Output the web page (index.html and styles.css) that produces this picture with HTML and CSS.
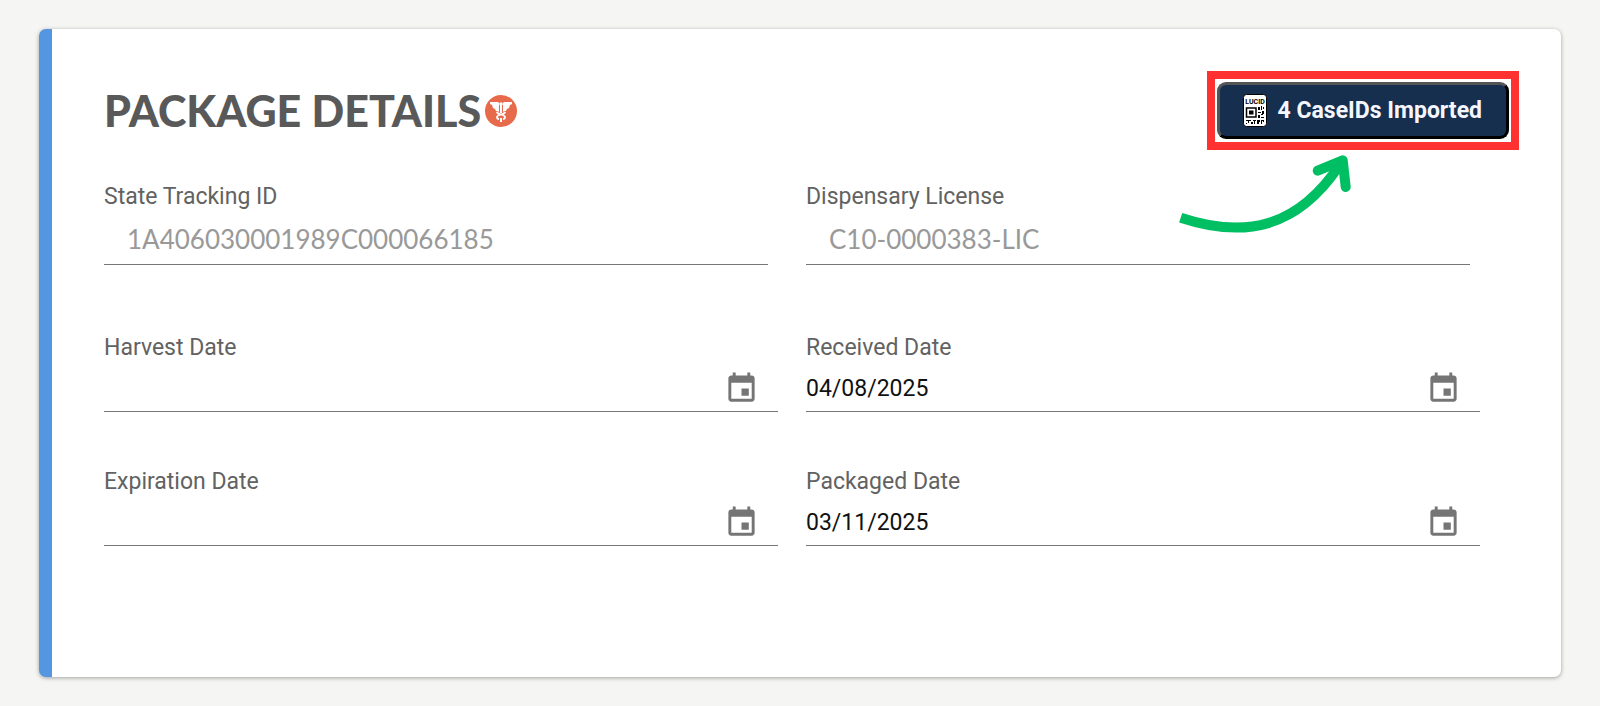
FILE: index.html
```html
<!DOCTYPE html>
<html lang="en">
<head>
    <meta charset="UTF-8">
    <meta name="viewport" content="width=device-width, initial-scale=1.0">
    <title>Package Details</title>
    <link rel="stylesheet" href="styles.css">
</head>
<body>
    <main class="card">
        <header class="card-header">
            <h1>PACKAGE DETAILS
                <svg class="badge" viewBox="0 0 32 32" aria-hidden="true">
                    <circle cx="16" cy="16" r="16" fill="#e76b4a"/>
                    <path d="M5 7h8l2 2v8l-4-1-1-2-2-1-1-3-2-1zM27 7h-8l-2 2v8l4-1 1-2 2-1 1-3 2-1z" fill="#fff"/>
                    <path d="M16 8v19" stroke="#e76b4a" stroke-width="4"/>
                    <path d="M16 9v9M16 23v4" stroke="#fff" stroke-width="2"/>
                    <circle cx="16" cy="9" r="1.800" fill="#fff"/>
                    <path d="M12 17c0 3 8 2 8 5 0 1-1 2-2 2M20 17c0 3-8 2-8 5 0 1 1 2 2 2" fill="none" stroke="#fff" stroke-width="1.800"/>
                </svg>
            </h1>
            <div class="callout">
                <button type="button" class="import-btn">
                    <svg class="qr" viewBox="0 0 24 33" aria-hidden="true">
                        <rect x="0.500" y="0.500" width="23" height="32" rx="3" fill="#fff" stroke="#000"/>
                        <text x="12" y="10" text-anchor="middle">LUCID</text>
                        <path d="M3.500 14h9.500v9h-9.500z" fill="none" stroke="#000" stroke-width="1.500"/>
                        <path d="M6 16.500h4.500v4h-4.500z"/>
                        <path d="M15 13h2v3h-2zM18 12h1v4h-1zM20 13h1v2h-1zM15 18h3v1h-3zM19 17h2v3h-1v1h-2v-1h1zM15 21h2v3h-2zM18 23h3v1h-3zM3 26h5v1h-2v2h-1v-2h-2zM8 28h2v2h-2zM10 26h3v1h-1v3h-1v-3h-1zM14 26h3v2h-1v2h-2zM18 26h3v2h-1v-1h-1v3h-1zM3 29h1v1h-1z"/>
                    </svg>
                    4 CaseIDs Imported
                </button>
                <svg class="arrow" viewBox="0 0 180 90" aria-hidden="true">
                    <path d="M5.700 67.700C70 89 122 78 164 16"/>
                    <path d="M142.700 20.700L167.700 10.300L170.700 37" stroke-linecap="round" stroke-linejoin="round"/>
                </svg>
            </div>
        </header>

        <form class="fields">
            <div class="field id-field">
                <label for="tracking">State Tracking ID</label>
                <input type="text" id="tracking" value="1A406030001989C000066185" disabled>
            </div>
            <div class="field id-field">
                <label for="license">Dispensary License</label>
                <input type="text" id="license" value="C10-0000383-LIC" disabled>
            </div>

            <div class="field">
                <label for="harvest">Harvest Date</label>
                <div class="date-input">
                    <input type="text" id="harvest">
                    <button type="button" aria-label="Choose harvest date">
                        <svg viewBox="0 0 24 24"><path d="M17 12h-5v5h5v-5zM16 1v2H8V1H6v2H5c-1.110 0-1.990.9-1.990 2L3 19c0 1.100.890 2 2 2h14c1.100 0 2-.9 2-2V5c0-1.100-.9-2-2-2h-1V1h-2zm3 18H5V8h14v11z"/></svg>
                    </button>
                </div>
            </div>
            <div class="field">
                <label for="received">Received Date</label>
                <div class="date-input">
                    <input type="text" id="received" value="04/08/2025">
                    <button type="button" aria-label="Choose received date">
                        <svg viewBox="0 0 24 24"><path d="M17 12h-5v5h5v-5zM16 1v2H8V1H6v2H5c-1.110 0-1.990.9-1.990 2L3 19c0 1.100.890 2 2 2h14c1.100 0 2-.9 2-2V5c0-1.100-.9-2-2-2h-1V1h-2zm3 18H5V8h14v11z"/></svg>
                    </button>
                </div>
            </div>

            <div class="field">
                <label for="expiration">Expiration Date</label>
                <div class="date-input">
                    <input type="text" id="expiration">
                    <button type="button" aria-label="Choose expiration date">
                        <svg viewBox="0 0 24 24"><path d="M17 12h-5v5h5v-5zM16 1v2H8V1H6v2H5c-1.110 0-1.990.9-1.990 2L3 19c0 1.100.890 2 2 2h14c1.100 0 2-.9 2-2V5c0-1.100-.9-2-2-2h-1V1h-2zm3 18H5V8h14v11z"/></svg>
                    </button>
                </div>
            </div>
            <div class="field">
                <label for="packaged">Packaged Date</label>
                <div class="date-input">
                    <input type="text" id="packaged" value="03/11/2025">
                    <button type="button" aria-label="Choose packaged date">
                        <svg viewBox="0 0 24 24"><path d="M17 12h-5v5h5v-5zM16 1v2H8V1H6v2H5c-1.110 0-1.990.9-1.990 2L3 19c0 1.100.890 2 2 2h14c1.100 0 2-.9 2-2V5c0-1.100-.9-2-2-2h-1V1h-2zm3 18H5V8h14v11z"/></svg>
                    </button>
                </div>
            </div>
        </form>
    </main>
</body>
</html>
```
FILE: styles.css
```css
* {
    box-sizing: border-box;
}

body {
    margin: 0;
    padding: 29px 39px 28px;
    background: #f5f5f3;
    font-family: Roboto, sans-serif;
}

.card {
    padding: 42px 42px 131px 52px;
    background: #fff;
    border-left: 13px solid #5596e0;
    border-radius: 7px;
    box-shadow: 0 1px 4px rgba(0, 0, 0, 0.35);
}

.card-header {
    display: flex;
    align-items: center;
    justify-content: space-between;
    margin-bottom: 33px;
}

h1 {
    display: flex;
    align-items: center;
    gap: 4px;
    margin: 0;
    font-family: Lato, sans-serif;
    font-size: 43px;
    font-weight: 900;
    line-height: 48px;
    color: #595959;
}

.badge {
    width: 32px;
    height: 32px;
}

/* Red frame around the import button */
.callout {
    position: relative;
    padding: 3px 2px;
    border: 8px solid #ff3131;
}

.import-btn {
    display: flex;
    align-items: center;
    gap: 11px;
    height: 57px;
    padding: 0 24px 0 23px;
    background: #162f4e;
    border: 3px outset #000;
    border-radius: 9px;
    font-family: Roboto, sans-serif;
    font-size: 23px;
    font-weight: bold;
    color: #f5f7ff;
    cursor: pointer;
}

.qr {
    width: 24px;
    height: 33px;
}

.qr text {
    font-size: 7px;
    font-weight: bold;
}

.arrow {
    position: absolute;
    top: 71px;
    left: -40px;
    width: 180px;
    height: 90px;
    fill: none;
    stroke: #00bf63;
    stroke-width: 10;
    pointer-events: none;
}

.fields {
    display: grid;
    grid-template-columns: 1fr 1fr;
    gap: 56px 28px;
    margin-right: 39px;
}

label {
    display: block;
    font-size: 23px;
    line-height: 28px;
    color: #626262;
}

input {
    width: 100%;
    border: none;
    background: none;
    outline: none;
}

.id-field {
    margin: 0 10px 13px 0;
}

.id-field input {
    height: 54px;
    padding: 2px 23px 0;
    border-bottom: 1px solid #777;
    font-family: Lato, sans-serif;
    font-size: 26px;
    color: #999;
}

.date-input {
    display: flex;
    align-items: center;
    height: 50px;
    padding: 3px 19px 0 0;
    border-bottom: 1px solid #777;
}

.date-input input {
    padding: 0;
    font-family: Roboto, sans-serif;
    font-size: 23px;
    color: #111;
}

.date-input button {
    display: flex;
    padding: 0;
    border: none;
    background: none;
    cursor: pointer;
}

.date-input svg {
    width: 35px;
    height: 35px;
    fill: #757575;
}
```
